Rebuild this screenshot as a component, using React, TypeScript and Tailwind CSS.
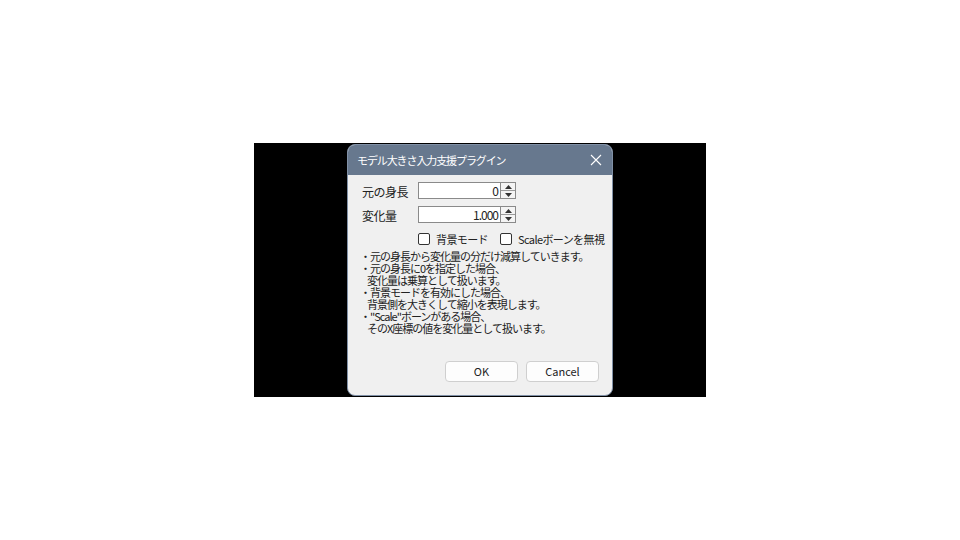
import React from 'react';

const jp = { fontFamily: '"Noto Sans CJK JP", "Noto Sans", sans-serif' };

function Spinner() {
  return (
    <div className="w-[15px] h-[17px] flex flex-col border border-l-0 border-[#8a8a8a] bg-[#f4f4f4]">
      <div className="flex-1 flex items-center justify-center border-b border-[#9a9a9a]">
        <svg width="7" height="4" viewBox="0 0 7 4"><path d="M3.5 0 L7 4 L0 4 Z" fill="#333" /></svg>
      </div>
      <div className="flex-1 flex items-center justify-center">
        <svg width="7" height="4" viewBox="0 0 7 4"><path d="M0 0 L7 0 L3.5 4 Z" fill="#333" /></svg>
      </div>
    </div>
  );
}

function NumberRow({ label, value }: { label: string; value: string }) {
  return (
    <div className="flex items-center h-[17px]">
      <span className="w-[56px] text-[12px] tracking-[-0.5px] text-[#222] leading-none pt-[3px]">{label}</span>
      <div className="w-[83px] h-[17px] bg-white border border-[#8a8a8a] flex items-center justify-end pr-[2px] text-[12px] tracking-[-1px] text-[#222]">
        {value}
      </div>
      <Spinner />
    </div>
  );
}

function Check({ label }: { label: string }) {
  return (
    <label className="flex items-center gap-[6px]">
      <span className="w-[12px] h-[12px] border border-[#333] rounded-[2px] bg-white" />
      <span className="text-[11px] tracking-[-0.6px] text-[#222] leading-none">{label}</span>
    </label>
  );
}

export default function App() {
  const notes = [
    { text: '・元の身長から変化量の分だけ減算していきます。', indent: false },
    { text: '・元の身長に0を指定した場合、', indent: false },
    { text: '変化量は乗算として扱います。', indent: true },
    { text: '・背景モードを有効にした場合、', indent: false },
    { text: '背景側を大きくして縮小を表現します。', indent: true },
    { text: '・"Scale"ボーンがある場合、', indent: false },
    { text: 'そのX座標の値を変化量として扱います。', indent: true },
  ];

  return (
    <div className="w-[960px] h-[540px] bg-white pt-[143px] pl-[254px]" style={jp}>
      <div className="w-[452px] h-[254px] bg-black pt-[1px] pl-[93px]">
        <div className="w-[266px] h-[252px] rounded-[8px] overflow-hidden flex flex-col bg-[#f0f0f0] border border-[#8090a6]">
          <div className="h-[30px] bg-[#67788e] flex items-center justify-between pl-[9px] pr-[8px] shrink-0">
            <span className="text-white text-[11px] tracking-[-1.1px] leading-none">モデル大きさ入力支援プラグイン</span>
            <svg width="12" height="12" viewBox="0 0 12 12" className="mr-[2px]">
              <path d="M1 1 L11 11 M11 1 L1 11" stroke="#ffffff" strokeWidth="1.1" />
            </svg>
          </div>
          <div className="flex flex-col pl-[14px] pt-[7px]">
            <div className="flex flex-col gap-[7px]">
              <NumberRow label="元の身長" value="0" />
              <NumberRow label="変化量" value="1.000" />
            </div>
            <div className="flex items-center gap-[12px] pl-[56px] mt-[10px]">
              <Check label="背景モード" />
              <Check label="Scaleボーンを無視" />
            </div>
            <div className="mt-[5px] flex flex-col text-[11px] tracking-[-1px] leading-[12px] text-[#222]">
              {notes.map((n, i) => (
                <div key={i} className={n.indent ? 'pl-[5px]' : '-ml-[2px]'}>{n.text}</div>
              ))}
            </div>
          </div>
          <div className="mt-auto mb-[13px] flex justify-end gap-[8px] pr-[13px]">
            <button className="w-[73px] h-[21px] bg-[#fdfdfd] border border-[#cfcfcf] rounded-[4px] text-[11px] text-[#222] leading-none">OK</button>
            <button className="w-[73px] h-[21px] bg-[#fdfdfd] border border-[#cfcfcf] rounded-[4px] text-[11px] text-[#222] leading-none">Cancel</button>
          </div>
        </div>
      </div>
    </div>
  );
}
